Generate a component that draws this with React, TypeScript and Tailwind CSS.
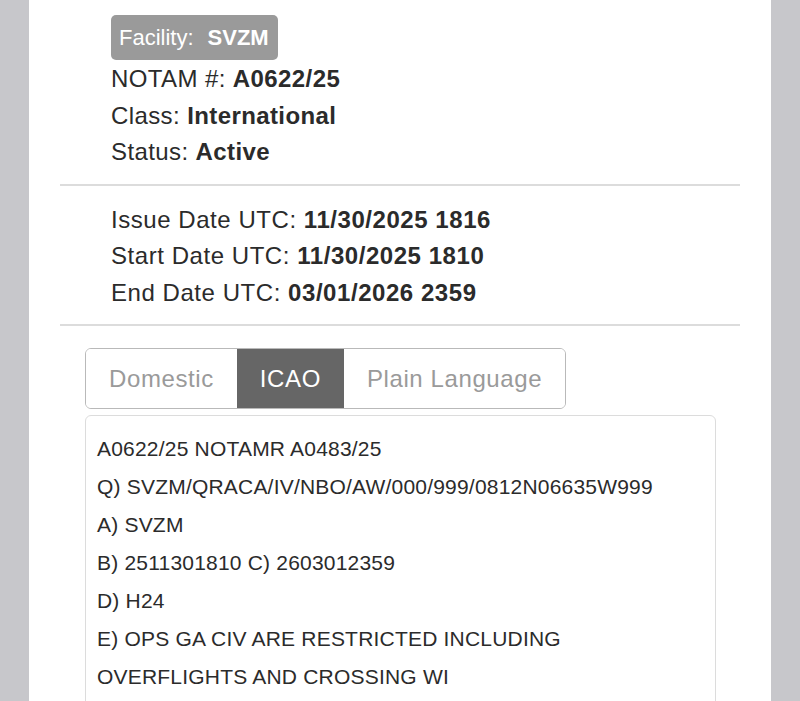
import React from 'react';

const lines = [
    'A0622/25 NOTAMR A0483/25',
    'Q) SVZM/QRACA/IV/NBO/AW/000/999/0812N06635W999',
    'A) SVZM',
    'B) 2511301810 C) 2603012359',
    'D) H24',
    'E) OPS GA CIV ARE RESTRICTED INCLUDING',
    'OVERFLIGHTS AND CROSSING WI',
];

export default function App() {
    const tabs = ['Domestic', 'ICAO', 'Plain Language'];

    return (
        <div className="w-[800px] h-[701px] overflow-hidden bg-[#c7c7cb] flex justify-center font-['Liberation_Sans',Arial,sans-serif]">
            <div className="w-[742px] h-full bg-white px-[31px] text-[#2b2b2b]">
                {/* header */}
                <div className="pt-[15px] pl-[51px] pb-[13px]">
                    <div className="inline-flex items-center h-[45px] pl-[8px] pr-[9px] rounded-[5px] bg-[#9a9a9a] text-white text-[22px]">
                        <span>Facility:</span>
                        <span className="font-bold ml-[14px]">SVZM</span>
                    </div>
                    <div className="text-[24px] tracking-[0.4px] leading-[36.5px] mt-[1px]">
                        <div>NOTAM #: <span className="font-bold">A0622/25</span></div>
                        <div>Class: <span className="font-bold">International</span></div>
                        <div>Status: <span className="font-bold">Active</span></div>
                    </div>
                </div>
                <div className="h-[2px] bg-[#dcdcdc]" />

                {/* dates */}
                <div className="pl-[51px] pt-[16px] pb-[13px] text-[24px] tracking-[0.55px] leading-[36.5px]">
                    <div>Issue Date UTC: <span className="font-bold">11/30/2025 1816</span></div>
                    <div>Start Date UTC: <span className="font-bold">11/30/2025 1810</span></div>
                    <div>End Date UTC: <span className="font-bold">03/01/2026 2359</span></div>
                </div>
                <div className="h-[2px] bg-[#dcdcdc]" />

                {/* tabs */}
                <div className="pl-[25px] pr-[24px] pt-[22px]">
                    <div className="inline-flex h-[61px] border border-[#b9b9b9] rounded-[6px] overflow-hidden">
                        {tabs.map((t) => (
                            <div
                                key={t}
                                className={`flex items-center px-[23px] text-[24px] tracking-[0.6px] ${t === 'ICAO'
                                    ? 'bg-[#666666] text-white'
                                    : 'bg-white text-[#9a9a9a]'
                                    }`}
                            >
                                {t}
                            </div>
                        ))}
                    </div>

                    <div className="mt-[6px] border border-[#dcdcdc] rounded-[6px] px-[11px] pt-[14px] h-[320px] text-[21px] tracking-[0.2px] leading-[38px] text-[#2b2b2b]">
                        {lines.map((l) => (
                            <div key={l}>{l}</div>
                        ))}
                    </div>
                </div>
            </div>
        </div>
    );
}
